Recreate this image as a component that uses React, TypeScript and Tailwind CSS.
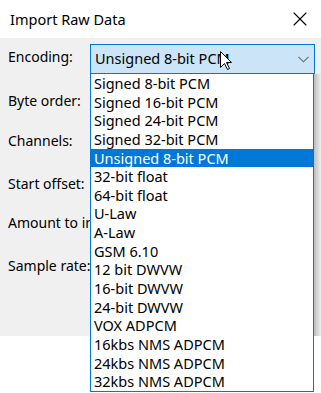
import { X } from 'lucide-react'

const encodings = [
  'Signed 8-bit PCM',
  'Signed 16-bit PCM',
  'Signed 24-bit PCM',
  'Signed 32-bit PCM',
  'Unsigned 8-bit PCM',
  '32-bit float',
  '64-bit float',
  'U-Law',
  'A-Law',
  'GSM 6.10',
  '12 bit DWVW',
  '16-bit DWVW',
  '24-bit DWVW',
  'VOX ADPCM',
  '16kbs NMS ADPCM',
  '24kbs NMS ADPCM',
  '32kbs NMS ADPCM',
]

const selected = 'Unsigned 8-bit PCM'

function Cursor() {
  return (
    <svg width="13" height="20" viewBox="0 0 13 20" className="absolute left-[130px] top-[7px] z-20">
      <path
        d="M0.5 0.5 L0.5 16.5 L4.5 12.5 L7.5 18.5 L9.5 17.5 L6.5 11.5 L11.5 11.5 Z"
        fill="white"
        stroke="black"
        strokeWidth="1"
      />
    </svg>
  )
}

export default function App() {
  return (
    <div className="w-[321px] h-[393px] bg-white overflow-hidden text-black font-['Noto_Sans',sans-serif] text-[14.5px]">
      {/* Title bar */}
      <div className="h-[38px] flex items-center justify-between pl-[10px] pr-[9px]">
        <span className="leading-none">Import Raw Data</span>
        <X className="w-[24px] h-[24px]" strokeWidth={1.1} />
      </div>

      {/* Body */}
      <div className="relative h-[298px] bg-[#f0f0f0] pl-[8px] text-[14px]">
        <div className="pt-[6px] flex items-start">
          <span className="w-[82px] leading-[26px]">Encoding:</span>
          <div className="relative text-[14.5px]">
            <div className="w-[225px] h-[30px] border border-[#0078d7] bg-[#cce4f7] flex items-center justify-between pl-[4px] pr-[5px]">
              <span>{selected}</span>
              <svg width="11" height="7" viewBox="0 0 11 7" className="mt-[1px]">
                <polyline points="0.5,0.8 5.5,5.8 10.5,0.8" fill="none" stroke="#6b6b6b" strokeWidth="1.1" />
              </svg>
            </div>
            <Cursor />

            {/* Dropdown list */}
            <div className="absolute left-0 top-[29px] w-[224px] bg-white border border-[#0078d7] z-10">
              {encodings.map((e) => (
                <div
                  key={e}
                  className={
                    e === selected
                      ? 'h-[18.65px] leading-[18.65px] pl-[3px] bg-[#0078d7] text-white'
                      : 'h-[18.65px] leading-[18.65px] pl-[3px]'
                  }
                >
                  {e}
                </div>
              ))}
            </div>
          </div>
        </div>

        <div className="mt-[17px] leading-[20px]">Byte order:</div>
        <div className="mt-[20px] leading-[20px]">Channels:</div>
        <div className="mt-[23px] leading-[20px]">Start offset:</div>
        <div className="mt-[19px] leading-[20px] w-[82px] overflow-hidden whitespace-nowrap">Amount to import:</div>
        <div className="mt-[23px] leading-[20px]">Sample rate:</div>

        {/* list shadow on the dialog face */}
        <div className="absolute left-[314px] top-[36px] bottom-0 w-[7px] bg-gradient-to-r from-[#bdbdbd] to-[#f0f0f0]" />
      </div>
    </div>
  )
}
